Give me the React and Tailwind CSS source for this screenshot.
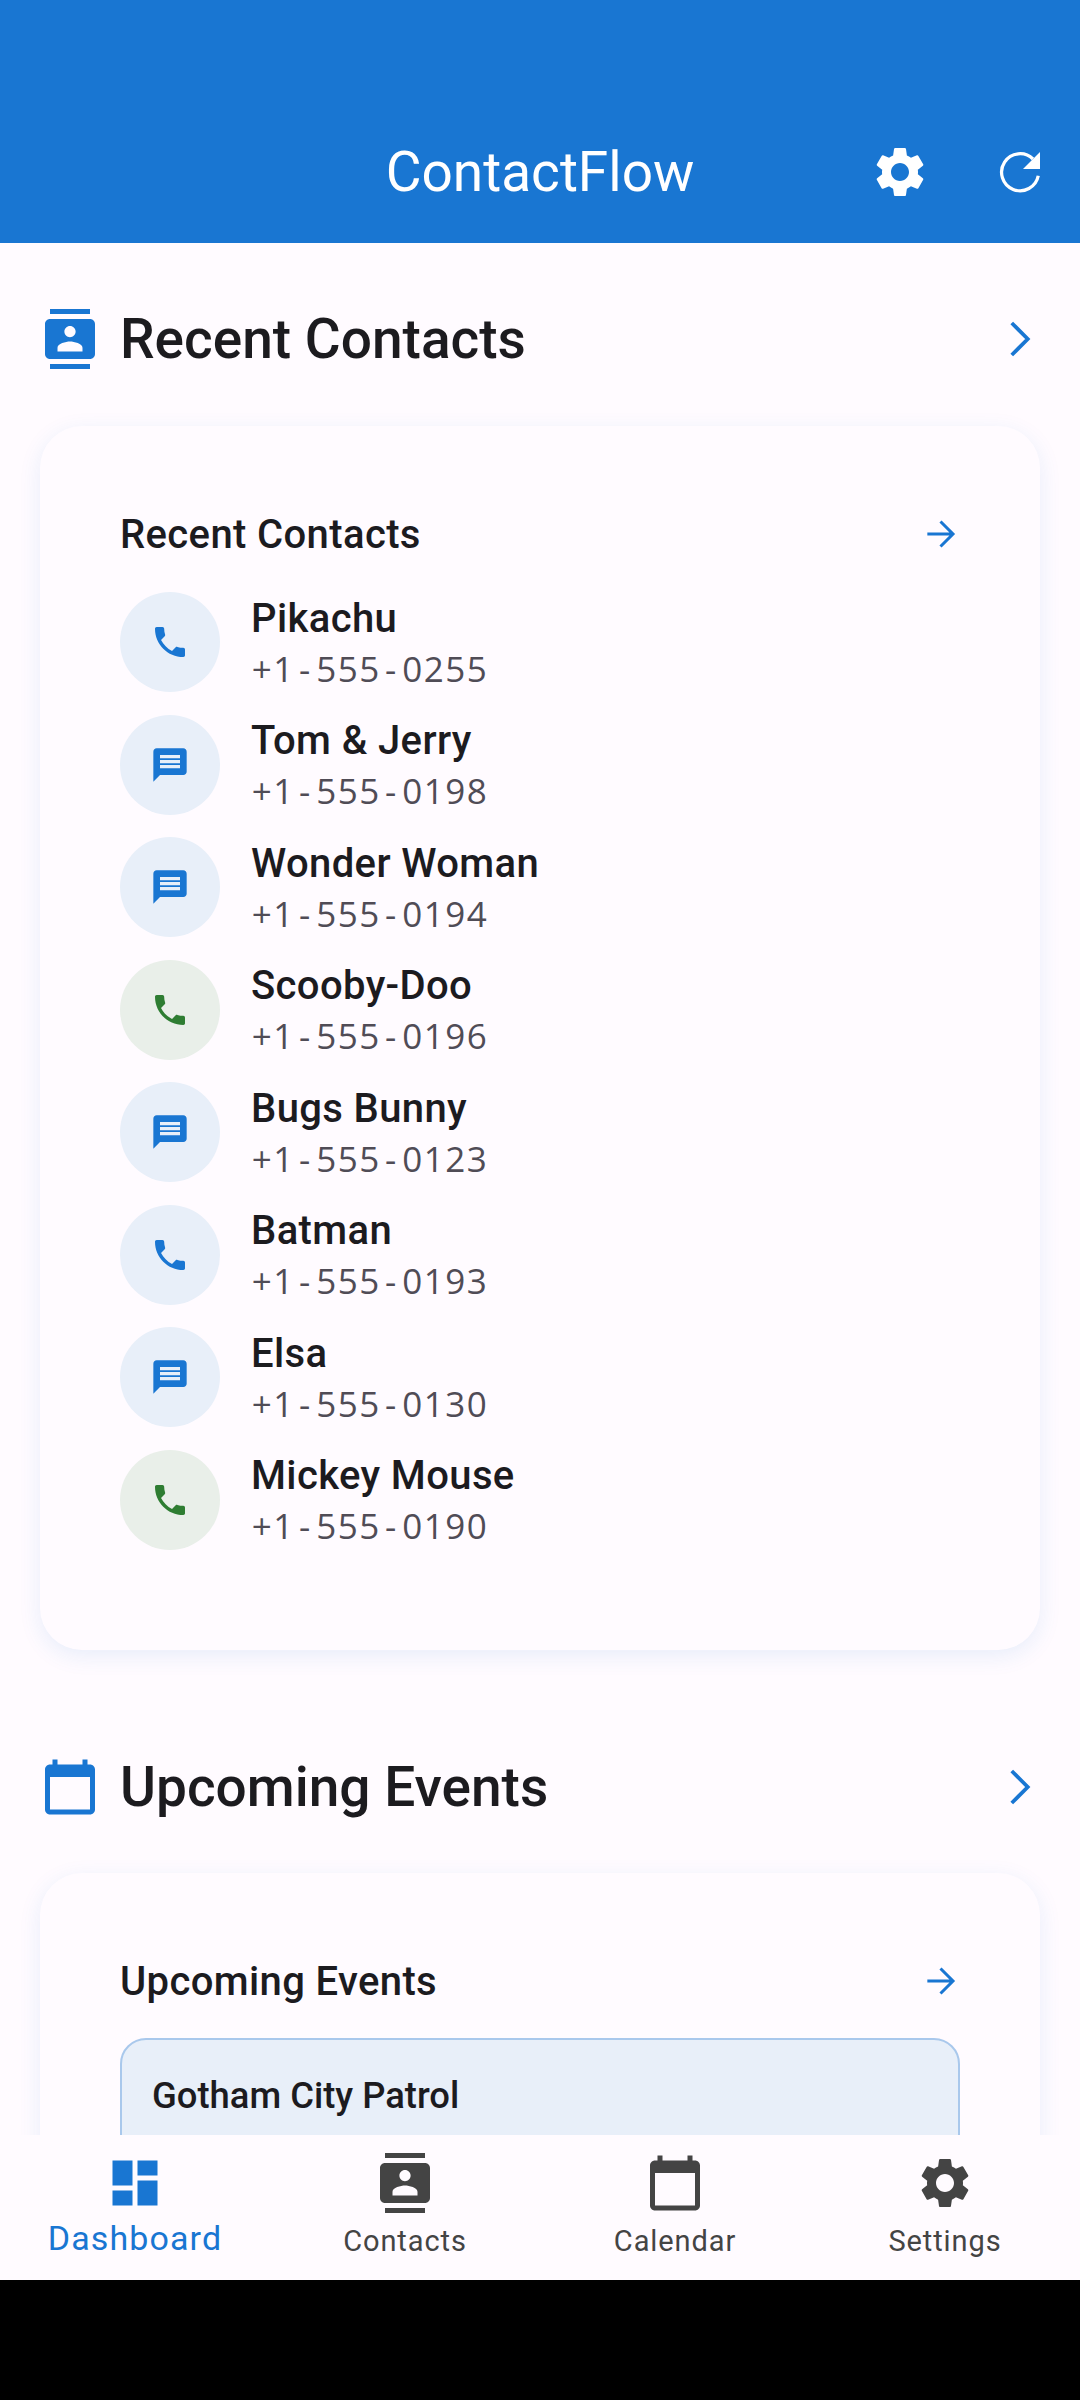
import React from "react";
import {
  MdContacts,
  MdPhone,
  MdMessage,
  MdSettings,
  MdDashboard,
  MdCalendarToday,
} from "react-icons/md";

const contacts = [
  { name: "Pikachu", phone: "+1-555-0255", kind: "call" },
  { name: "Tom & Jerry", phone: "+1-555-0198", kind: "msg" },
  { name: "Wonder Woman", phone: "+1-555-0194", kind: "msg" },
  { name: "Scooby-Doo", phone: "+1-555-0196", kind: "missed" },
  { name: "Bugs Bunny", phone: "+1-555-0123", kind: "msg" },
  { name: "Batman", phone: "+1-555-0193", kind: "call" },
  { name: "Elsa", phone: "+1-555-0130", kind: "msg" },
  { name: "Mickey Mouse", phone: "+1-555-0190", kind: "missed" },
];

function Refresh() {
  return (
    <svg width="60" height="60" viewBox="0 0 24 24">
      <path d="M17.200 6.800A7.400 7.400 0 1 0 19.300 13.500" fill="none" stroke="#fff" strokeWidth="1.300" />
      <path d="M20 4v6.800h-6.800z" fill="#fff" />
    </svg>
  );
}

function Chevron() {
  return (
    <svg width="60" height="60" viewBox="0 0 24 24" fill="none" stroke="#1976d2" strokeWidth="1.500">
      <path d="M8.700 5.600 15.100 12l-6.400 6.400" />
    </svg>
  );
}

function Arrow() {
  return (
    <svg width="40" height="40" viewBox="0 0 24 24" fill="none" stroke="#1976d2" strokeWidth="1.800">
      <path d="M4.400 12H19.600M12.300 4.500 19.800 12l-7.500 7.500" />
    </svg>
  );
}

function SectionTitle({ icon, title }) {
  return (
    <div className="flex h-[63px] items-center justify-between pr-[30px] pl-[40px]">
      <div className="flex items-center gap-[20px]">
        {icon}
        <h2 className="mt-[2px] text-[55px] leading-none font-medium text-[#1c1b1f]">{title}</h2>
      </div>
      <Chevron />
    </div>
  );
}

function CardHeader({ title }) {
  return (
    <div className="flex h-[60px] items-center justify-between">
      <h3 className="pt-[1px] text-[40px] leading-none font-medium tracking-[0.375px] text-[#1c1b1f]">{title}</h3>
      <Arrow />
    </div>
  );
}

// the phone numbers sit on a fixed character pitch
function PhoneNumber({ value }) {
  return (
    <div className="font-['Open_Sans',sans-serif] text-[35px] leading-[40px] font-normal text-[#504c56]">
      {value.split("").map((ch, i) => (
        <span key={i} className="inline-block w-[21.500px] text-center">
          {ch}
        </span>
      ))}
    </div>
  );
}

function ContactRow({ contact }) {
  const green = contact.kind === "missed";
  return (
    <div className="flex h-[122.500px] items-center gap-[31px]">
      <div
        className={`flex h-[100px] w-[100px] shrink-0 items-center justify-center rounded-full ${
          green ? "bg-[#e9efe9]" : "bg-[#e8eff9]"
        }`}
      >
        {contact.kind === "msg" ? (
          <MdMessage className="text-[40px] text-[#1976d2]" />
        ) : (
          <MdPhone className={`text-[40px] ${green ? "text-[#2e7d32]" : "text-[#1976d2]"}`} />
        )}
      </div>
      <div className="flex flex-col gap-[7px]">
        <div className="text-[40px] leading-[46px] font-medium tracking-[0.375px] text-[#1c1b1f]">{contact.name}</div>
        <PhoneNumber value={contact.phone} />
      </div>
    </div>
  );
}

function NavItem({ icon, label, active }) {
  return (
    <div className="flex flex-1 flex-col items-center">
      <div className={active ? "text-[#1976d2]" : "text-[#444444]"}>{icon}</div>
      <span
        className={
          active
            ? "mt-[5px] text-[34px] leading-[40px] tracking-[1.100px] text-[#1976d2]"
            : "mt-[10px] text-[29px] leading-[36px] tracking-[0.9px] text-[#444444]"
        }
      >
        {label}
      </span>
    </div>
  );
}

export default function App() {
  return (
    <div className="flex h-[2400px] w-[1080px] flex-col overflow-hidden bg-black font-['Roboto',sans-serif]">
      <header className="relative flex h-[243px] shrink-0 items-end justify-center bg-[#1976d2] pb-[37px]">
        <h1 className="text-[55px] leading-[68px] text-white">ContactFlow</h1>
        <div className="absolute right-[30px] bottom-[41px] flex items-center gap-[60px]">
          <MdSettings className="text-[60px] text-white" />
          <Refresh />
        </div>
      </header>

      <main className="min-h-0 flex-1 overflow-hidden bg-[#fffbff] pt-[64px]">
        <SectionTitle icon={<MdContacts className="text-[60px] text-[#1976d2]" />} title="Recent Contacts" />

        <section className="mx-[40px] mt-[56px] rounded-[42px] bg-[#fffbff] px-[80px] pt-[78px] pb-[89px] shadow-[0_6px_22px_rgba(25,118,210,0.1)]">
          <CardHeader title="Recent Contacts" />
          <div className="mt-[17px]">
            {contacts.map((c) => (
              <ContactRow key={c.name} contact={c} />
            ))}
          </div>
        </section>

        <div className="mt-[105px]">
          <SectionTitle icon={<MdCalendarToday className="text-[60px] text-[#1976d2]" />} title="Upcoming Events" />
        </div>

        <section className="mx-[40px] mt-[55px] rounded-[42px] bg-[#fffbff] px-[80px] pt-[78px] shadow-[0_6px_22px_rgba(25,118,210,0.1)]">
          <CardHeader title="Upcoming Events" />
          <div className="mt-[27px] h-[200px] rounded-[26px] border-[2.600px] border-[#a9c8ec] bg-[#e8eff9] px-[30px] pt-[34px]">
            <div className="text-[36.400px] leading-[44px] font-medium text-[#1c1b1f]">Gotham City Patrol</div>
          </div>
        </section>
      </main>

      <nav className="flex h-[145px] shrink-0 items-start bg-[#fffbff] pt-[18px]">
        <NavItem active label="Dashboard" icon={<MdDashboard className="text-[60px]" />} />
        <NavItem label="Contacts" icon={<MdContacts className="text-[60px]" />} />
        <NavItem label="Calendar" icon={<MdCalendarToday className="text-[60px]" />} />
        <NavItem label="Settings" icon={<MdSettings className="text-[60px]" />} />
      </nav>
      <div className="h-[120px] shrink-0 bg-black" />
    </div>
  );
}
